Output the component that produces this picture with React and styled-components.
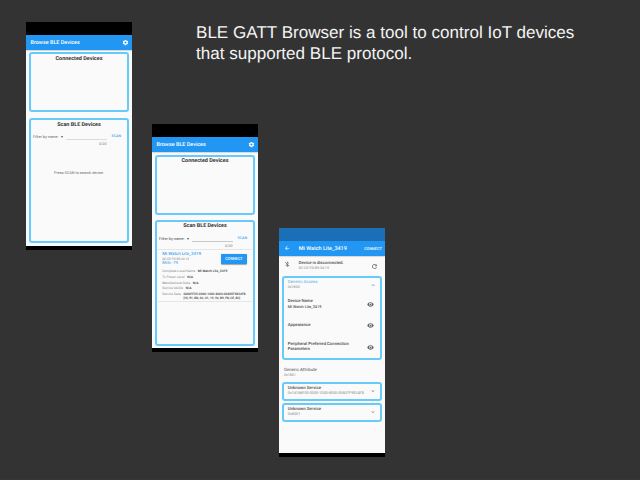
import React from 'react';
import styled, { createGlobalStyle } from 'styled-components';

const GlobalStyle = createGlobalStyle`
  body { margin: 0; background: #333333; overflow: hidden; }
  * { box-sizing: border-box; }
`;

const Slide = styled.main`
  display: grid;
  grid-template-columns: 26px 106px 20px 106px 21px 106px 1fr;
  grid-template-rows: 480px;
  align-items: start;
  width: 640px;
  height: 480px;
  background: #333333;
  border-bottom: 1px solid #3c3338;
  font-family: Roboto, sans-serif;
  text-rendering: geometricPrecision;
`;

const Headline = styled.h1`
  grid-row: 1;
  grid-column: 4 / -1;
  margin: 21.6px 0 0 44px;
  font: 400 17.07px/21.6px "Liberation Sans", Arial, sans-serif;
  color: #f4f4f4;
  white-space: nowrap;
`;

const Phone = styled.section`
  grid-row: 1;
  grid-column: ${(p) => p.$column};
  margin-top: ${(p) => p.$top}px;
  height: ${(p) => p.$height}px;
  display: flex;
  flex-direction: column;
  background: #fafafa;
  overflow: hidden;
`;

const StatusBar = styled.div`
  flex: none;
  height: 13px;
  background: ${(p) => p.$color || '#000'};
`;

const NavBar = styled.div`
  flex: none;
  height: 4px;
  margin-top: auto;
  background: #000;
`;

const AppBar = styled.header`
  flex: none;
  display: flex;
  align-items: center;
  height: 15px;
  padding: 0 3.3px 0 4.5px;
  background: #2196f3;
  box-shadow: 0 0.5px 1.5px rgba(0, 0, 0, 0.35);
  color: #fff;
`;

const Text = styled.div`
  font-size: ${(p) => p.$size || 4}px;
  line-height: ${(p) => p.$line || 5}px;
  font-weight: ${(p) => p.$weight || 400};
  color: ${(p) => p.$color || '#4a4a4a'};
  margin-top: ${(p) => p.$top || 0}px;
  margin-left: ${(p) => p.$left || 0}px;
  white-space: nowrap;
`;

const Spacer = styled.div`
  flex: 1;
`;

const Card = styled.section`
  flex: none;
  height: ${(p) => p.$height}px;
  margin: ${(p) => p.$top}px 3px 0;
  border: 2px solid #66cbfb;
  border-radius: 3px;
  background: #fafafa;
`;

const CardTitle = styled.h2`
  margin: ${(p) => p.$top}px 0 0;
  text-align: center;
  font-size: 5.45px;
  line-height: 7px;
  font-weight: 700;
  color: #333;
  white-space: nowrap;
`;

const Filter = styled.div`
  display: grid;
  grid-template-columns: 27.5px 5.5px 40.5px 1fr;
  align-items: center;
  height: 7px;
  margin: ${(p) => p.$top}px 0 0 2px;
`;

const Caret = styled.i`
  width: 0;
  border: 1px solid transparent;
  border-width: 2px 1px;
  border-top-color: #555;
  border-bottom: 0;
`;

const Input = styled.div`
  height: 7px;
  border-bottom: 1px solid ${(p) => p.$color};
`;

const Counter = styled.div`
  margin: 1.4px 20.5px 0 0;
  text-align: right;
  font-size: 3.6px;
  line-height: 5px;
  color: #777;
`;

const Device = styled.article`
  height: 53.5px;
  margin: 0 1px;
  padding-left: 4.2px;
  border: solid #e6e6e6;
  border-width: 1px 0;
`;

const DeviceHead = styled.div`
  display: flex;
  justify-content: space-between;
  padding: 2.6px 5px 0 0;
  height: 19px;
`;

const Connect = styled.button`
  display: grid;
  place-items: center;
  width: 26px;
  height: 10px;
  margin-top: 1.4px;
  padding: 0;
  border: 0;
  border-radius: 1px;
  background: #2196f3;
  box-shadow: 0 0.5px 1px rgba(0, 0, 0, 0.35);
  color: #fff;
  font: 500 3.8px/5px Roboto, sans-serif;
`;

const Fact = styled.div`
  display: flex;
  height: 5.87px;
`;

const Row = styled.div`
  flex: none;
  display: flex;
  align-items: center;
  height: ${(p) => p.$height}px;
  padding: ${(p) => p.$pad};
`;

const Icon = styled.svg`
  flex: none;
  display: block;
  width: ${(p) => p.$size}px;
  height: ${(p) => p.$size}px;
  margin-top: ${(p) => p.$top || 0}px;
  fill: ${(p) => p.$color || '#666'};
`;

const shapes = {
  gear: 'M19.4 13a7.5 7.5 0 0 0 0-2l2.1-1.6-2-3.5-2.5 1a7.3 7.3 0 0 0-1.7-1L15 3h-6l-.4 2.9a7.3 7.3 0 0 0-1.7 1l-2.5-1-2 3.5L4.6 11a7.5 7.5 0 0 0 0 2l-2.1 1.6 2 3.5 2.5-1a7.3 7.3 0 0 0 1.7 1L9 21h6l.4-2.9a7.3 7.3 0 0 0 1.7-1l2.500 1 2-3.500zM12 15.500a3.500 3.500 0 1 1 0-7 3.500 3.500 0 0 1 0 7z',
  back: 'M20 11H7.830l5.590-5.590L12 4l-8 8 8 8 1.410-1.410L7.830 13H20z',
  bluetoothOff: 'M13 5.830l1.880 1.880-1.600 1.600 1.410 1.410 3.020-3.020L12 2h-1v5.030l2 2zM5.410 4L4 5.410 10.590 12 5 17.590 6.410 19 11 14.410V22h1l4.290-4.290 2.300 2.290L20 18.590zM13 18.170v-3.760l1.880 1.880z',
  refresh: 'M17.650 6.350A8 8 0 1 0 19.730 14h-2.080A6 6 0 1 1 12 6c1.660 0 3.140.690 4.220 1.780L13 11h7V4z',
  eye: 'M12 4.500C7 4.500 2.730 7.600 1 12c1.730 4.400 6 7.500 11 7.500s9.300-3.100 11-7.500c-1.700-4.400-6-7.500-11-7.500zM12 17a5 5 0 1 1 0-10 5 5 0 0 1 0 10zm0-8a3 3 0 1 0 0 6 3 3 0 0 0 0-6z',
  up: 'M12 8l-6 6 1.400 1.400L12 10.800l4.600 4.600L18 14z',
  down: 'M16.600 8.600L12 13.200 7.400 8.600 6 10l6 6 6-6z',
};

const Glyph = ({ name, ...rest }) => (
  <Icon viewBox="0 0 24 24" {...rest}>
    <path d={shapes[name]} />
  </Icon>
);

const BrowserBar = () => (
  <AppBar>
    <Text $size={5.45} $line={8} $weight={500} $color="#fff">Browse BLE Devices</Text>
    <Spacer />
    <Glyph name="gear" $size={7} $color="#fff" />
  </AppBar>
);

const ScanFilter = ({ top, ink, rule }) => (
  <>
    <Filter $top={top}>
      <Text $size={3.95} $color={ink}>Filter by name:</Text>
      <Caret />
      <Input $color={rule} />
      <Text $size={3.65} $weight={500} $color="#42a5f5" $left={5}>SCAN</Text>
    </Filter>
    <Counter>0/20</Counter>
  </>
);

const facts = [
  ['Complete Local Name', 'Mi Watch Lite_3419'],
  ['Tx Power Level', 'N/A'],
  ['Manufacturer Data', 'N/A'],
  ['Service UUIDs', 'N/A'],
];

const Characteristic = ({ title, detail, second, height }) => (
  <Row $height={height} $pad="0 6px 0 3.8px">
    <div>
      <Text $size={4.25} $weight={500} $line={5.4}>{title}</Text>
      {second && <Text $size={4.25} $weight={500} $line={5.4}>{second}</Text>}
      {detail && <Text $size={3.8} $weight={500} $line={5.4}>{detail}</Text>}
    </div>
    <Spacer />
    <Glyph name="eye" $size={7} />
  </Row>
);

const Service = ({ title, id, top }) => (
  <Card $top={top} $height={18.6}>
    <Row $height={14.6} $pad="0 3.6px 0 3.8px">
      <div>
        <Text $size={4.3} $weight={500} $line={4.8}>{title}</Text>
        <Text $size={3.77} $line={4.6} $color="#888">{id}</Text>
      </div>
      <Spacer />
      <Glyph name="down" $size={6} />
    </Row>
  </Card>
);

export default function App() {
  return (
    <>
      <GlobalStyle />
      <Slide>
        <Headline>
          BLE GATT Browser is a tool to control IoT devices<br />
          that supported BLE protocol.
        </Headline>

        <Phone $column={2} $top={22} $height={228}>
          <StatusBar />
          <BrowserBar />
          <Card $top={2} $height={60}>
            <CardTitle $top={1.7}>Connected Devices</CardTitle>
          </Card>
          <Card $top={6} $height={125}>
            <CardTitle $top={1.7}>Scan BLE Devices</CardTitle>
            <ScanFilter top={4.6} ink="#666" rule="#dcdcdc" />
            <Text $size={3.82} $top={23.4} $left={23} $color="#666">Press SCAN to search device.</Text>
          </Card>
          <NavBar />
        </Phone>

        <Phone $column={4} $top={124} $height={228}>
          <StatusBar />
          <BrowserBar />
          <Card $top={3} $height={60}>
            <CardTitle $top={1}>Connected Devices</CardTitle>
          </Card>
          <Card $top={5} $height={126}>
            <CardTitle $top={1}>Scan BLE Devices</CardTitle>
            <ScanFilter top={5.4} ink="#444" rule="#c9c9c9" />
            <Device>
              <DeviceHead>
                <div>
                  <Text $size={4.4} $weight={500} $color="#42a5f5">Mi Watch Lite_3419</Text>
                  <Text $size={3.25} $line={4} $color="#888">8C:CE:FD:B9:34:19</Text>
                  <Text $size={3.8} $line={4} $weight={500} $color="#42a5f5">RSSI: -79</Text>
                </div>
                <Connect>CONNECT</Connect>
              </DeviceHead>
              {facts.map(([label, value]) => (
                <Fact key={label}>
                  <Text $size={3.35} $color="#888">{label}</Text>
                  <Text $size={3.35} $weight={600} $left={2.6} $color="#444">{value}</Text>
                </Fact>
              ))}
              <Fact>
                <Text $size={3.35} $color="#888">Service Data</Text>
                <div>
                  <Text $size={3.15} $line={4.4} $weight={600} $left={2.6} $color="#444">0000FE95-0000-1000-8000-00805F9B34FB</Text>
                  <Text $size={3.1} $line={3.6} $weight={600} $left={2.6} $color="#444">[10, 51, BD, 0C, 01, 19, 34, B9, FD, CE, 8C]</Text>
                </div>
              </Fact>
            </Device>
          </Card>
          <NavBar />
        </Phone>

        <Phone $column={6} $top={228} $height={229}>
          <StatusBar $color="#1b6fb6" />
          <AppBar>
            <Glyph name="back" $size={6.4} $color="#fff" />
            <Text $size={5.45} $line={8} $weight={500} $color="#fff" $left={8.9}>Mi Watch Lite_3419</Text>
            <Spacer />
            <Text $size={3.8} $weight={500} $color="#fff">CONNECT</Text>
          </AppBar>
          <Row $height={20} $pad="0 7px 0 4.5px">
            <Glyph name="bluetoothOff" $size={6.5} $top={-4} />
            <Text $left={8.8}>
              <Text $size={4.25} $weight={500} $line={5.4}>Device is disconnected.</Text>
              <Text $size={3.65} $line={5} $color="#888">8C:CE:FD:B9:34:19</Text>
            </Text>
            <Spacer />
            <Glyph name="refresh" $size={7} />
          </Row>
          <Card $top={0} $height={84}>
            <Row $height={14} $pad="0 3.600px 0 3.800px">
              <div>
                <Text $size={4.3} $color="#42a5f5">Generic Access</Text>
                <Text $size={3.6} $line={4.6} $color="#888">0x1800</Text>
              </div>
              <Spacer />
              <Glyph name="up" $size={6.4} $color="#2196f3" />
            </Row>
            <Characteristic title="Device Name" detail="Mi Watch Lite_3419" height={24} />
            <Characteristic title="Appearance" height={18.5} />
            <Characteristic title="Peripheral Preferred Connection" second="Parameters" height={25.5} />
          </Card>
          <Row $height={22} $pad="3px 0 0 5px">
            <div>
              <Text $size={4.4}>Generic Attribute</Text>
              <Text $size={3.6} $color="#888">0x1801</Text>
            </div>
          </Row>
          <Service top={0} title="Unknown Service" id="0x16186F00-0000-1000-8000-00807F9B34FB" />
          <Service top={2.4} title="Unknown Service" id="0x8001" />
          <NavBar />
        </Phone>
      </Slide>
    </>
  );
}
